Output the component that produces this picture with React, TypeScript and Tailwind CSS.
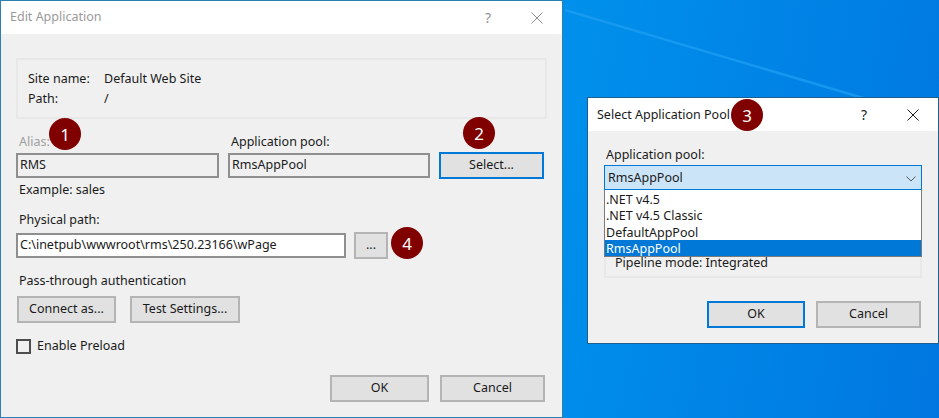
import React from "react";

const btn =
  "flex items-center justify-center border-2 border-[#b4b4b4] bg-[#e1e1e1] text-[#1a1a1a]";
const focusBtn =
  "flex items-center justify-center border-2 border-[#0078d7] bg-[#e1e1e1] text-[#1a1a1a]";
const field =
  "flex items-center h-[25px] pl-[2px] border-2 border-[#8f8f8f] text-[#1a1a1a]";

function Badge({ n, className }: { n: number; className: string }) {
  return (
    <div
      className={`absolute w-[32px] h-[32px] rounded-full bg-[#800000] text-white text-[17px] flex items-center justify-center ${className}`}
    >
      {n}
    </div>
  );
}

function CloseIcon({ color }: { color: string }) {
  return (
    <svg width="12" height="12" viewBox="0 0 12 12" fill="none" stroke={color} strokeWidth="1">
      <path d="M0.5 0.5 L11.5 11.5 M11.5 0.5 L0.5 11.5" />
    </svg>
  );
}

export default function App() {
  return (
    <div
      className="relative w-[939px] h-[418px] overflow-hidden bg-[linear-gradient(100deg,#009cf2_0%,#0091ec_55%,#0077e0_100%)] text-[12.5px] leading-none"
      style={{ fontFamily: '"Noto Sans", sans-serif' }}
    >
      {/* wallpaper streak */}
      <svg className="absolute left-0 top-0" width="939" height="418">
        <path d="M565 10 L870 100" stroke="#1fa0f4" strokeWidth="2.5" fill="none" opacity="0.7" />
      </svg>

      {/* Edit Application */}
      <div className="absolute left-0 top-0 w-[563px] h-[418px] border border-[#2b7fb3] bg-[#f0f0f0]">
        <div className="h-[33px] bg-white flex items-center pl-[9px] pr-[19px] text-[#9a9a9a]">
          <span className="flex-1">Edit Application</span>
          <span className="text-[#8f8f8f] text-[14px] mr-[40px]">?</span>
          <CloseIcon color="#8f8f8f" />
        </div>

        <div className="ml-[15px] mt-[24px] w-[531px] h-[61px] border-2 border-[#e8e8e8] pl-[10px] pt-[11px] flex flex-col gap-[4px] text-[#1a1a1a]">
          <div className="flex h-[16px] items-center">
            <span className="w-[76px]">Site name:</span>
            <span>Default Web Site</span>
          </div>
          <div className="flex h-[16px] items-center">
            <span className="w-[76px]">Path:</span>
            <span>/</span>
          </div>
        </div>

        <div className="flex ml-[15px] mt-[15px]">
          <div className="w-[212px]">
            <div className="h-[17px] pl-[3px] flex items-center text-[#a0a0a0]">Alias:</div>
            <div className={`${field} w-[203px] mt-[2px]`}>RMS</div>
            <div className="h-[16px] mt-[4px] pl-[3px] flex items-center text-[#1a1a1a]">Example: sales</div>
          </div>
          <div className="w-[211px]">
            <div className="h-[17px] pl-[3px] flex items-center text-[#1a1a1a]">Application pool:</div>
            <div className={`${field} w-[202px] mt-[2px]`}>RmsAppPool</div>
          </div>
          <div className={`${focusBtn} w-[105px] h-[27px] mt-[18px]`}>Select...</div>
        </div>

        <div className="h-[16px] mt-[14px] ml-[18px] flex items-center text-[#1a1a1a]">Physical path:</div>
        <div className="flex items-center ml-[15px] mt-[4px]">
          <div className={`${field} w-[330px] bg-white`}>C:\inetpub\wwwroot\rms\250.23166\wPage</div>
          <div className={`${btn} w-[34px] h-[27px] ml-[8px]`}>...</div>
        </div>

        <div className="h-[16px] mt-[14px] ml-[18px] flex items-center text-[#1a1a1a]">Pass-through authentication</div>
        <div className="flex ml-[16px] mt-[7px] gap-[14px]">
          <div className={`${btn} w-[99px] h-[27px]`}>Connect as...</div>
          <div className={`${btn} w-[110px] h-[27px]`}>Test Settings...</div>
        </div>

        <div className="flex items-center ml-[15px] mt-[16px] gap-[6px] text-[#1a1a1a]">
          <div className="w-[15px] h-[15px] border-2 border-[#4d4d4d] bg-[#f0f0f0]" />
          <span>Enable Preload</span>
        </div>

        <div className="flex justify-end mr-[17px] mt-[21px] gap-[11px]">
          <div className={`${btn} w-[99px] h-[27px]`}>OK</div>
          <div className={`${btn} w-[105px] h-[27px]`}>Cancel</div>
        </div>
      </div>

      {/* Select Application Pool */}
      <div className="absolute left-[587px] top-[97px] w-[352px] h-[247px] border border-[#1d5f8f] bg-[#f0f0f0]">
        <div className="h-[33px] pt-px bg-white flex items-center pl-[9px] pr-[19px] text-[#1a1a1a]">
          <span className="flex-1">Select Application Pool</span>
          <span className="text-[#1a1a1a] text-[14px] mr-[40px]">?</span>
          <CloseIcon color="#1a1a1a" />
        </div>

        <div className="relative mx-[16px] mt-[16px]">
          <div className="h-[16px] ml-[2px] flex items-center text-[#1a1a1a]">Application pool:</div>
          <div className="mt-[2px] w-[318px] h-[25px] border border-[#0078d7] bg-[#cce4f7] pt-[2px] pl-[3px] pr-[5px] flex items-center justify-between text-[#1a1a1a]">
            <span>RmsAppPool</span>
            <svg width="10" height="6" viewBox="0 0 10 6" fill="none" stroke="#555555" strokeWidth="1">
              <path d="M0.5 0.5 L5 5 L9.5 0.5" />
            </svg>
          </div>

          <div className="w-[318px] h-[67px] mt-[21px] border-2 border-[#e8e8e8] pl-[9px] flex items-end pb-[7px] text-[#1a1a1a]">
            Pipeline mode: Integrated
          </div>

          {/* open combo list */}
          <div className="absolute left-0 top-[43px] w-[318px] h-[67px] border-x border-b border-[#7a7a7a] bg-white text-[#1a1a1a] flex flex-col">
            <div className="h-[17px] pt-[3px] pl-px flex items-center">.NET v4.5</div>
            <div className="h-[17px] pt-[2px] pl-px flex items-center">.NET v4.5 Classic</div>
            <div className="h-[16px] pt-[2px] pl-px flex items-center">DefaultAppPool</div>
            <div className="h-[16px] pt-[2px] pl-px flex items-center bg-[#0078d7] text-white">RmsAppPool</div>
          </div>
        </div>

        <div className="flex justify-end mr-[17px] mt-[23px] gap-[11px]">
          <div className={`${focusBtn} w-[98px] h-[27px]`}>OK</div>
          <div className={`${btn} w-[105px] h-[27px]`}>Cancel</div>
        </div>
      </div>

      <Badge n={1} className="left-[49px] top-[118px]" />
      <Badge n={2} className="left-[463px] top-[117px]" />
      <Badge n={3} className="left-[731px] top-[99px]" />
      <Badge n={4} className="left-[391px] top-[227px]" />
    </div>
  );
}
